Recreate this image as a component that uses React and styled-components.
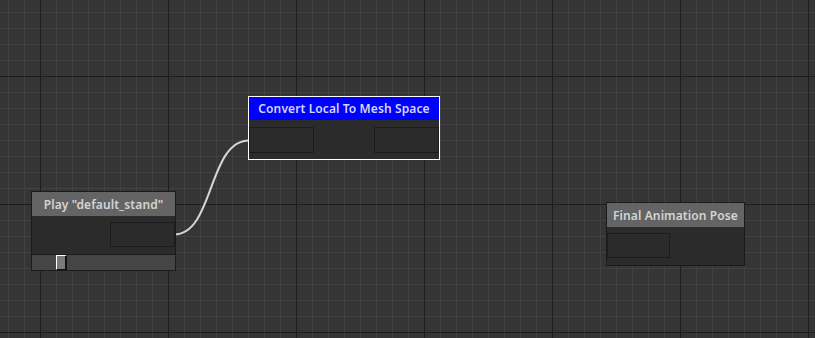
import React from "react";
import styled, { createGlobalStyle } from "styled-components";

const GlobalStyle = createGlobalStyle`
  html, body {
    margin: 0;
    padding: 0;
    background: #333333;
    overflow: hidden;
  }
`;

// graph canvas with minor (16px) and major (128px) grid lines
const Canvas = styled.div`
  position: relative;
  width: 815px;
  height: 338px;
  overflow: hidden;
  font-family: "Noto Sans", "Open Sans", sans-serif;
  background-color: #353535;
  background-image:
    linear-gradient(to right, #1e1e1e 1px, transparent 1px),
    linear-gradient(to bottom, #1e1e1e 1px, transparent 1px),
    linear-gradient(to right, #414141 1px, transparent 1px),
    linear-gradient(to bottom, #414141 1px, transparent 1px);
  background-size: 128px 128px, 128px 128px, 16px 16px, 16px 16px;
  background-position: 40px 76px, 40px 76px, 8px 12px, 8px 12px;
`;

const Wires = styled.svg`
  position: absolute;
  left: 0;
  top: 0;
  pointer-events: none;
`;

const Node = styled.div`
  position: absolute;
  box-sizing: border-box;
  display: flex;
  flex-direction: column;
  background: #2b2b2b;
  border: 1px solid ${(p) => (p.selected ? "#ffffff" : "#1b1b1b")};
`;

const Header = styled.div`
  height: ${(p) => p.h || 23}px;
  display: flex;
  align-items: center;
  justify-content: center;
  background: ${(p) => p.color || "#646464"};
  color: ${(p) => (p.color ? "#d6d6f4" : "#d4d4d4")};
  font-size: 12px;
  font-weight: 600;
  white-space: nowrap;
  letter-spacing: 0.1px;
`;

const Body = styled.div`
  display: flex;
  justify-content: space-between;
  align-items: flex-start;
  padding: ${(p) => p.pad || "7px 0 0 0"};
  flex: 1;
`;

const Port = styled.div`
  box-sizing: border-box;
  width: ${(p) => p.w}px;
  height: ${(p) => p.h}px;
  border: 1px solid #1c1c1c;
  background: #2b2b2b;
  margin-left: ${(p) => (p.right ? "auto" : "0")};
`;

const SliderRow = styled.div`
  height: 15px;
  border-top: 1px solid #1b1b1b;
  background: #454545;
  display: flex;
  padding-left: 24px;
`;

const Handle = styled.div`
  box-sizing: border-box;
  width: 11px;
  height: 15px;
  background: #7a7a7a;
  border-left: 1px solid #ffffff;
  border-top: 1px solid #ffffff;
  border-right: 2px solid #111111;
  border-bottom: 1px solid #111111;
`;

export default function App() {
  return (
    <>
      <GlobalStyle />
      <Canvas>
        <Wires width="815" height="338">
          <path
            d="M174 234.5 C 214 234.5, 208 140.5, 249 140.5"
            fill="none"
            stroke="#d6d6d6"
            strokeWidth="2"
          />
        </Wires>

        <Node selected style={{ left: 248, top: 96, width: 192, height: 64 }}>
          <Header color="#0000ff">Convert Local To Mesh Space</Header>
          <Body>
            <Port w={65} h={26} />
            <Port w={65} h={26} right />
          </Body>
        </Node>

        <Node style={{ left: 31, top: 191, width: 145, height: 80 }}>
          <Header h={24}>Play "default_stand"</Header>
          <Body pad="6px 0 0 0">
            <Port w={65} h={25} right />
          </Body>
          <SliderRow>
            <Handle />
          </SliderRow>
        </Node>

        <Node style={{ left: 606, top: 202, width: 139, height: 64 }}>
          <Header h={24}>Final Animation Pose</Header>
          <Body pad="6px 0 0 0">
            <Port w={63} h={25} />
          </Body>
        </Node>
      </Canvas>
    </>
  );
}
